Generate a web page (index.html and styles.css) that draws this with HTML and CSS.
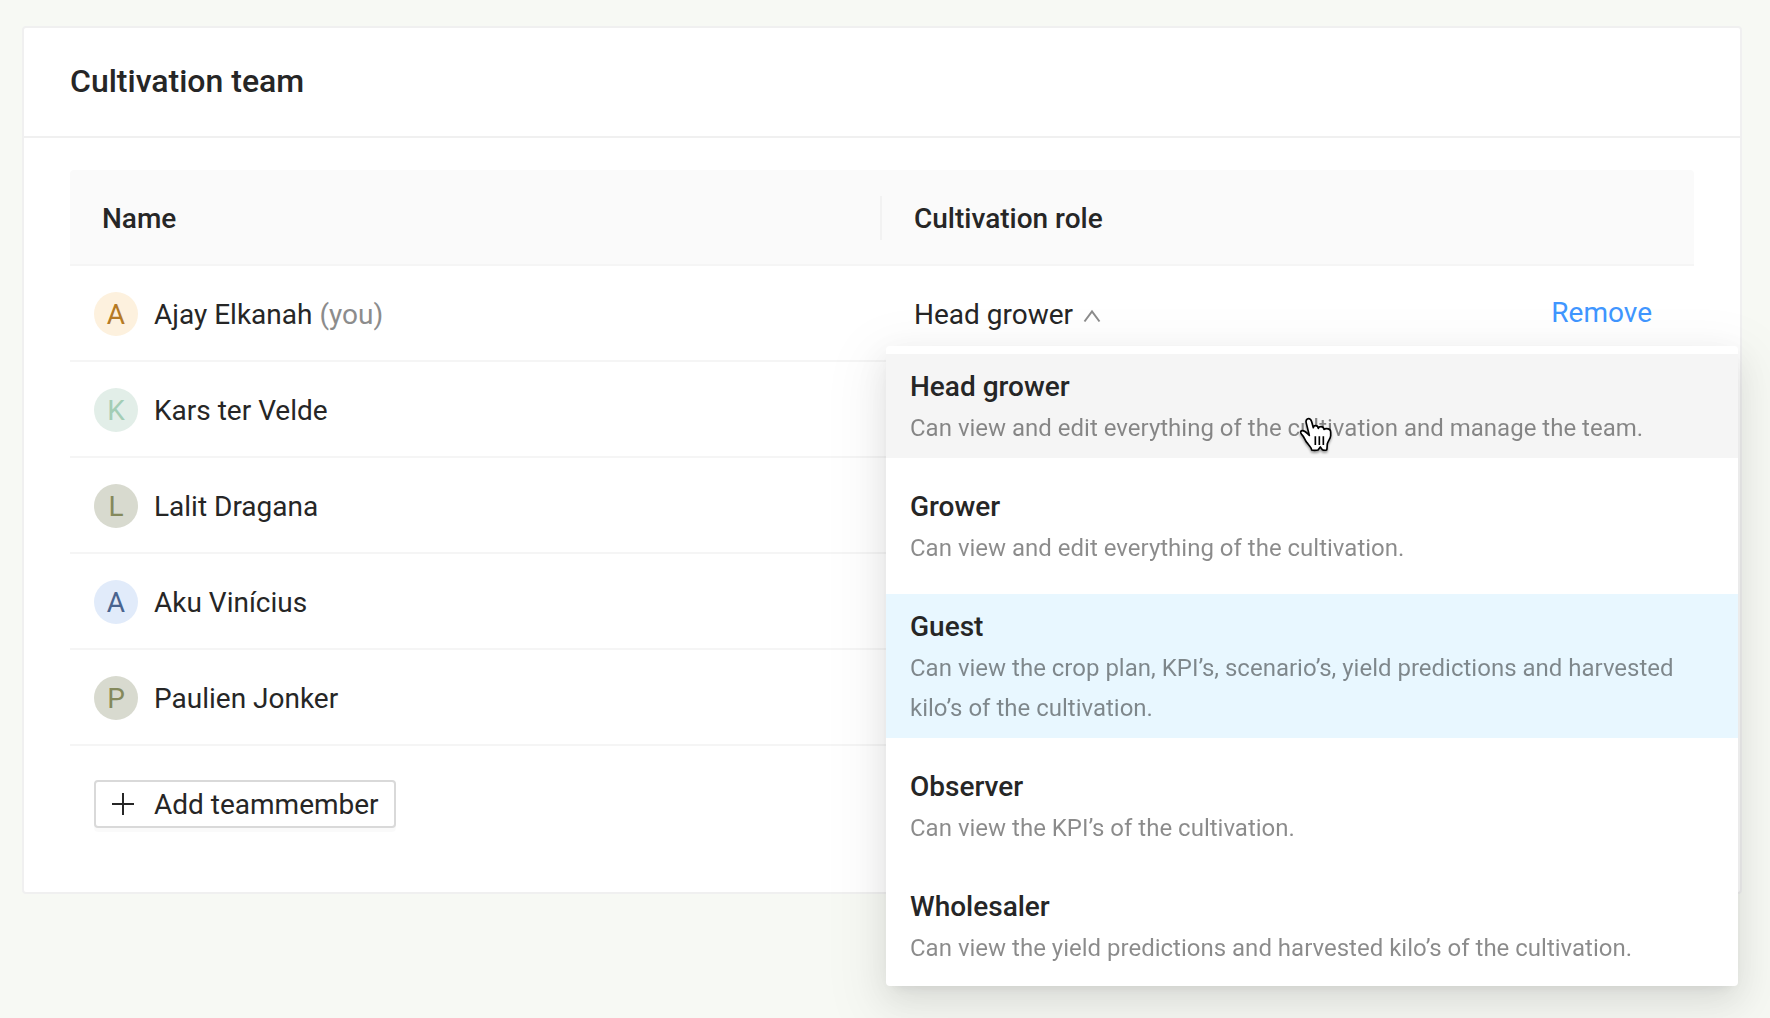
FILE: index.html
```html
<!DOCTYPE html>
<html lang="en">
<head>
  <meta charset="utf-8">
  <meta name="viewport" content="width=device-width, initial-scale=1">
  <title>Cultivation team</title>
  <link rel="stylesheet" href="styles.css">
</head>
<body>
  <main class="card">
    <header class="card-header">
      <h1 class="card-title">Cultivation team</h1>
    </header>
    <div class="card-body">
      <table class="team">
        <thead>
          <tr>
            <th scope="col">Name</th>
            <th scope="col">Cultivation role</th>
          </tr>
        </thead>
        <tbody>
          <tr>
            <td>
              <div class="member"><span class="avatar avatar-amber">A</span><span>Ajay Elkanah <span class="muted">(you)</span></span></div>
            </td>
            <td class="role-cell">
              <div class="role">
                <button class="role-trigger" type="button" aria-haspopup="listbox" aria-expanded="true">
                  Head grower
                  <svg class="chevron" viewBox="0 0 18 14" aria-hidden="true"><path d="M1.5 12.5 9 2.5l7.500 10"/></svg>
                </button>
                <a class="remove" href="#">Remove</a>
              </div>
              <div class="menu" role="listbox" aria-label="Cultivation role">
                <button class="option option-hover" type="button" role="option">
                  <span class="option-title">Head grower</span>
                  <span class="option-text">Can view and edit everything of the cultivation and manage the team.</span>
                  <svg class="pointer" viewBox="0 0 102 111" aria-hidden="true">
                    <path class="hand" d="M31 55 22 19C19 11 23 5 29 5c5 0 7 3 9 9l5 18c0-5 3-6 7-6 5 0 7 3 8 8 1-4 4-5 8-5 5 0 8 3 9 8 2-2 4-2 7-2 7 0 13 3 13 10v11c0 8-9 18-10 25-1 6 0 12-2 18-4 1-9 1-13-1l-6-8-7 9c-4 1-13 2-19 0 0-7-9-15-15-23C17 69 17 61 8 52c-6-7-3-11 3-11 7 0 12 7 20 14Z"/>
                    <path class="hand-lines" d="M49 58v26M61 58v26M73 58v26"/>
                  </svg>
                </button>
                <button class="option" type="button" role="option">
                  <span class="option-title">Grower</span>
                  <span class="option-text">Can view and edit everything of the cultivation.</span>
                </button>
                <button class="option option-selected" type="button" role="option" aria-selected="true">
                  <span class="option-title">Guest</span>
                  <span class="option-text">Can view the crop plan, KPI’s, scenario’s, yield predictions and harvested kilo’s of the cultivation.</span>
                </button>
                <button class="option" type="button" role="option">
                  <span class="option-title">Observer</span>
                  <span class="option-text">Can view the KPI’s of the cultivation.</span>
                </button>
                <button class="option" type="button" role="option">
                  <span class="option-title">Wholesaler</span>
                  <span class="option-text">Can view the yield predictions and harvested kilo’s of the cultivation.</span>
                </button>
              </div>
            </td>
          </tr>
          <tr>
            <td><div class="member"><span class="avatar avatar-green">K</span><span>Kars ter Velde</span></div></td>
            <td></td>
          </tr>
          <tr>
            <td><div class="member"><span class="avatar avatar-olive">L</span><span>Lalit Dragana</span></div></td>
            <td></td>
          </tr>
          <tr>
            <td><div class="member"><span class="avatar avatar-blue">A</span><span>Aku Vinícius</span></div></td>
            <td></td>
          </tr>
          <tr>
            <td><div class="member"><span class="avatar avatar-olive">P</span><span>Paulien Jonker</span></div></td>
            <td></td>
          </tr>
        </tbody>
      </table>
      <button class="add" type="button">
        <svg class="plus" viewBox="0 0 24 24" aria-hidden="true"><path d="M12 1v22M1 12h22"/></svg>
        Add teammember
      </button>
    </div>
  </main>
</body>
</html>
```
FILE: styles.css
```css
* {
  box-sizing: border-box;
}

body {
  min-height: 100vh;
  margin: 0;
  padding: 26px 28px 26px 22px;
  background: #f7f9f4;
  color: #262626;
  font-family: Roboto, "Liberation Sans", sans-serif;
  font-size: 28px;
  line-height: 46px;
}

button {
  font: inherit;
  color: inherit;
  cursor: pointer;
}

.card {
  background: #fff;
  border: 2px solid #f0f0f0;
  border-radius: 4px;
}

.card-header {
  padding: 32px 46px 34px;
  border-bottom: 2px solid #f0f0f0;
}

.card-title {
  margin: 0;
  font-size: 32px;
  font-weight: 500;
  line-height: 42px;
}

.card-body {
  padding: 32px 46px 64px;
}

/* Team table */
.team {
  width: 100%;
  table-layout: fixed;
  border-collapse: separate;
  border-spacing: 0;
}

.team th,
.team td {
  position: relative;
  padding: 26px 24px 22px;
  border-bottom: 2px solid #f5f5f5;
  text-align: left;
}

.team th {
  padding: 26px 32px 22px;
  background: #fafafa;
  font-weight: 500;
}

.team th:first-child {
  border-top-left-radius: 4px;
}

.team th:last-child {
  border-top-right-radius: 4px;
}

.team th:first-child::after {
  content: "";
  position: absolute;
  top: 26px;
  right: 0;
  width: 2px;
  height: 44px;
  background: #f2f2f2;
}

.member {
  display: flex;
  align-items: flex-start;
  gap: 16px;
}

.muted {
  color: #8c8c8c;
}

.avatar {
  width: 44px;
  height: 44px;
  border-radius: 50%;
  text-align: center;
}

.avatar-amber {
  background: #fdf1de;
  color: #b57a24;
}

.avatar-green {
  background: #e2eee8;
  color: #a3cdb5;
}

.avatar-olive {
  background: #d8dacf;
  color: #84895c;
}

.avatar-blue {
  background: #e1ebfa;
  color: #49648f;
}

/* Role column */
.team .role-cell {
  padding-left: 32px;
  padding-right: 42px;
}

.role {
  display: flex;
  align-items: flex-start;
  justify-content: space-between;
}

.role-trigger {
  display: flex;
  align-items: center;
  gap: 10px;
  padding: 0;
  border: 0;
  background: none;
}

.chevron {
  width: 18px;
  height: 14px;
  margin-top: 2px;
  fill: none;
  stroke: #8c8c8c;
  stroke-width: 2;
}

.remove {
  line-height: 42px;
  color: #4096ff;
  text-decoration: none;
}

.menu {
  position: absolute;
  z-index: 1;
  top: 80px;
  left: 4px;
  right: -44px;
  display: flex;
  flex-direction: column;
  gap: 16px;
  padding: 8px 0;
  background: #fff;
  border-radius: 4px;
  box-shadow:
    0 6px 12px -8px rgba(0, 0, 0, 0.12),
    0 12px 32px 0 rgba(0, 0, 0, 0.08),
    0 18px 56px 16px rgba(0, 0, 0, 0.05);
}

.option {
  position: relative;
  display: flex;
  flex-direction: column;
  padding: 12px 24px 10px;
  border: 0;
  background: none;
  text-align: left;
}

.option-hover {
  background: #f5f5f5;
}

.option-selected {
  background: #e8f7ff;
}

.option-title {
  font-weight: 500;
  line-height: 42px;
}

.option-text {
  font-size: 24px;
  line-height: 40px;
  color: #000;
  opacity: 0.45;
}

.pointer {
  position: absolute;
  top: 63px;
  left: 413px;
  width: 34px;
  height: 37px;
  overflow: visible;
  filter: drop-shadow(0 2px 1px rgba(0, 0, 0, 0.35));
}

.hand {
  fill: #fff;
  stroke: #000;
  stroke-width: 5;
  stroke-linejoin: round;
}

.hand-lines {
  fill: none;
  stroke: #000;
  stroke-width: 5;
}

.add {
  display: flex;
  align-items: flex-start;
  gap: 19px;
  height: 48px;
  margin: 34px 0 0 24px;
  padding: 0 15px;
  border: 2px solid #d9d9d9;
  border-radius: 4px;
  background: #fff;
  box-shadow: 0 4px 0 rgba(0, 0, 0, 0.02);
}

.plus {
  width: 24px;
  height: 24px;
  margin-top: 10px;
  fill: none;
  stroke: #262626;
  stroke-width: 2;
}
```
